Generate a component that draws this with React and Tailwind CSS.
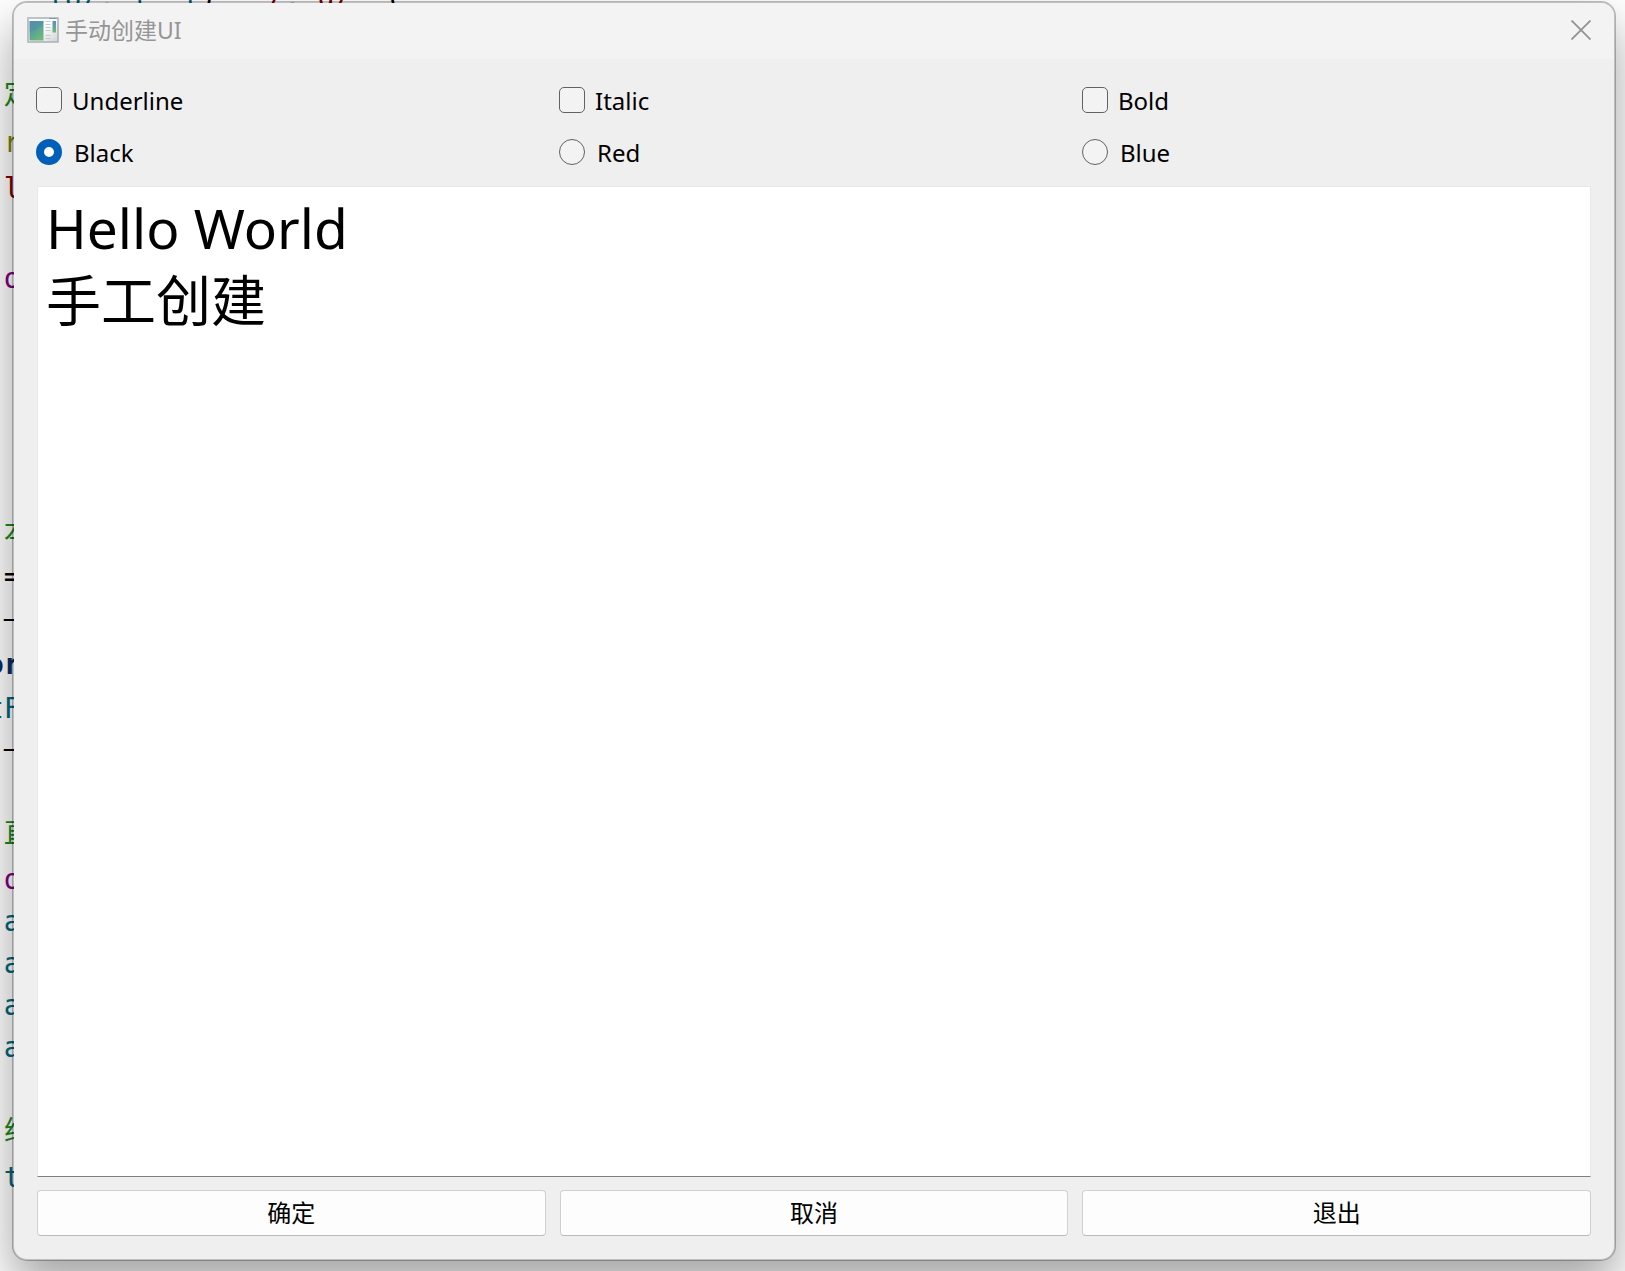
const codeRows = [
  { h: "h-[65px]", c: "", t: "" },
  { h: "h-[54px]", c: "text-[#1a8a1a]", t: " 定" },
  { h: "h-[42px]", c: "text-[#808000]", t: " r" },
  { h: "h-[50px]", c: "text-[#800000]", t: " l" },
  { h: "h-[44px]", c: "", t: "" },
  { h: "h-[42px]", c: "text-[#800080]", t: " o" },
  { h: "h-[210px]", c: "", t: "" },
  { h: "h-[46px]", c: "text-[#1a8a1a]", t: " 本" },
  { h: "h-[42px]", c: "text-black", t: " =" },
  { h: "h-[42px]", c: "text-black", t: " –" },
  { h: "h-[50px]", c: "text-[#092e64] font-bold", t: "or" },
  { h: "h-[38px]", c: "text-[#00677c]", t: "tF" },
  { h: "h-[42px]", c: "text-black", t: " –" },
  { h: "h-[39px]", c: "", t: "" },
  { h: "h-[50px]", c: "text-[#1a8a1a]", t: " 直" },
  { h: "h-[42px]", c: "text-[#800080]", t: " o" },
  { h: "h-[42px]", c: "text-[#00677c]", t: " a" },
  { h: "h-[42px]", c: "text-[#00677c]", t: " a" },
  { h: "h-[42px]", c: "text-[#00677c]", t: " a" },
  { h: "h-[42px]", c: "text-[#00677c]", t: " a" },
  { h: "h-[38px]", c: "", t: "" },
  { h: "h-[50px]", c: "text-[#1a8a1a]", t: " 线" },
  { h: "h-[42px]", c: "text-[#00677c]", t: " t" },
];

function CodeEditor() {
  return (
    <div
      aria-hidden="true"
      className="absolute inset-0 overflow-hidden bg-white font-['DejaVu_Sans_Mono','Noto_Sans_CJK_SC',monospace] text-[28px] leading-none whitespace-pre"
    >
      <div className="flex h-[3px] items-end overflow-hidden pl-12 leading-[10px]">
        <span className="text-[#00677c]">lU/. l  l</span>
        <span>)   </span>
        <span className="text-[#800000]">/. g/</span>
        <span>  (</span>
      </div>
      <div className="-ml-[13px]">
        {codeRows.map((row, i) => (
          <div key={i} className={`flex items-center ${row.h} ${row.c}`}>
            {row.t}
          </div>
        ))}
      </div>
    </div>
  );
}

function AppIcon() {
  return (
    <svg width="32" height="26" viewBox="0 0 32 26" aria-hidden="true">
      <defs>
        <linearGradient id="pane" x1="0" y1="0" x2="0.6" y2="1">
          <stop offset="0" stopColor="#5b8fb8" />
          <stop offset="0.5" stopColor="#5a9f9b" />
          <stop offset="1" stopColor="#6cba78" />
        </linearGradient>
        <linearGradient id="bar" x1="0" y1="0" x2="0" y2="1">
          <stop offset="0" stopColor="#5b8fb8" />
          <stop offset="1" stopColor="#6cba78" />
        </linearGradient>
        <linearGradient id="frame" x1="0" y1="0" x2="1" y2="1">
          <stop offset="0.5" stopColor="#fafbfb" />
          <stop offset="1" stopColor="#cfd2d4" />
        </linearGradient>
      </defs>
      <rect x="1" y="1" width="30" height="24" fill="url(#frame)" stroke="#adb3b9" strokeWidth="1.6" />
      <path d="M1 1.5h30" stroke="#b9c5cf" />
      <path d="M22 1.5h8" stroke="#8b9aa6" />
      <rect x="2.5" y="4" width="14" height="19.5" fill="url(#pane)" />
      <path d="M2.5 15Q12 13 16.5 5V4H2.5Z" fill="#4f86a8" opacity="0.35" />
      <path d="M18.5 4.5h5M18.5 7.5h5M18.5 10.5h5M18.5 13.5h5M18.5 18.5h5M18.5 21.5h5" stroke="#c6c9cb" />
      <rect x="25.5" y="4" width="3.5" height="11.5" fill="url(#bar)" />
    </svg>
  );
}

function Choice({ type, name, label, defaultChecked }) {
  const radio = type === "radio";
  return (
    <label className={`flex h-[26px] items-center ${radio ? "gap-3" : "gap-[10px]"}`}>
      <input
        type={type}
        name={name}
        defaultChecked={defaultChecked}
        className={`size-[26px] shrink-0 appearance-none border border-[#626262] bg-[#f3f3f3] checked:border-[#005fb8] ${
          radio ? "rounded-full checked:border-8 checked:bg-white" : "rounded-[5px] checked:bg-[#005fb8]"
        }`}
      />
      <span className="pt-[2px]">{label}</span>
    </label>
  );
}

export default function App() {
  return (
    <div className="relative flex min-h-screen flex-col pt-px pr-[9px] pb-[10px] pl-3 font-['Noto_Sans','Noto_Sans_CJK_SC',sans-serif] text-2xl leading-8 text-black">
      <CodeEditor />
      <section
        role="dialog"
        aria-labelledby="title"
        className="relative flex grow flex-col overflow-clip rounded-[15px] border-2 border-black/25 bg-[#efefef] bg-clip-padding shadow-[0_24px_48px_rgba(0,0,0,0.36)]"
      >
        <header className="flex h-14 items-center gap-[6px] bg-[#f3f3f3] pr-[23px] pb-[2px] pl-[13px]">
          <AppIcon />
          <h1 id="title" className="grow text-[23px] text-[#959595]">手动创建UI</h1>
          <button type="button" aria-label="Close">
            <svg width="20" height="20" viewBox="0 0 20 20" stroke="#929292" strokeWidth="1.8" aria-hidden="true">
              <path d="M0.5 0.5l19 19M19.5 0.5l-19 19" />
            </svg>
          </button>
        </header>
        <form className="flex grow flex-col px-[23px] pt-7 pb-[23px]">
          <div className="-ml-px grid grid-cols-3 gap-x-[14px] gap-y-[26px]">
            <Choice type="checkbox" name="underline" label="Underline" />
            <Choice type="checkbox" name="italic" label="Italic" />
            <Choice type="checkbox" name="bold" label="Bold" />
            <Choice type="radio" name="color" label="Black" defaultChecked />
            <Choice type="radio" name="color" label="Red" />
            <Choice type="radio" name="color" label="Blue" />
          </div>
          <textarea
            aria-label="Text"
            spellCheck={false}
            defaultValue={"Hello World\n手工创建"}
            className="mt-[21px] grow resize-none border border-[#e8e8e8] border-b-[#808080] bg-white px-2 py-[5px] text-[55px] leading-[72px] outline-none"
          />
          <div className="mt-[13px] grid grid-cols-3 gap-[14px]">
            {["确定", "取消", "退出"].map((label) => (
              <button
                key={label}
                type="button"
                className="h-[46px] rounded border border-[#d0d0d0] border-b-[#bababa] bg-[#fdfdfd]"
              >
                {label}
              </button>
            ))}
          </div>
        </form>
      </section>
    </div>
  );
}
